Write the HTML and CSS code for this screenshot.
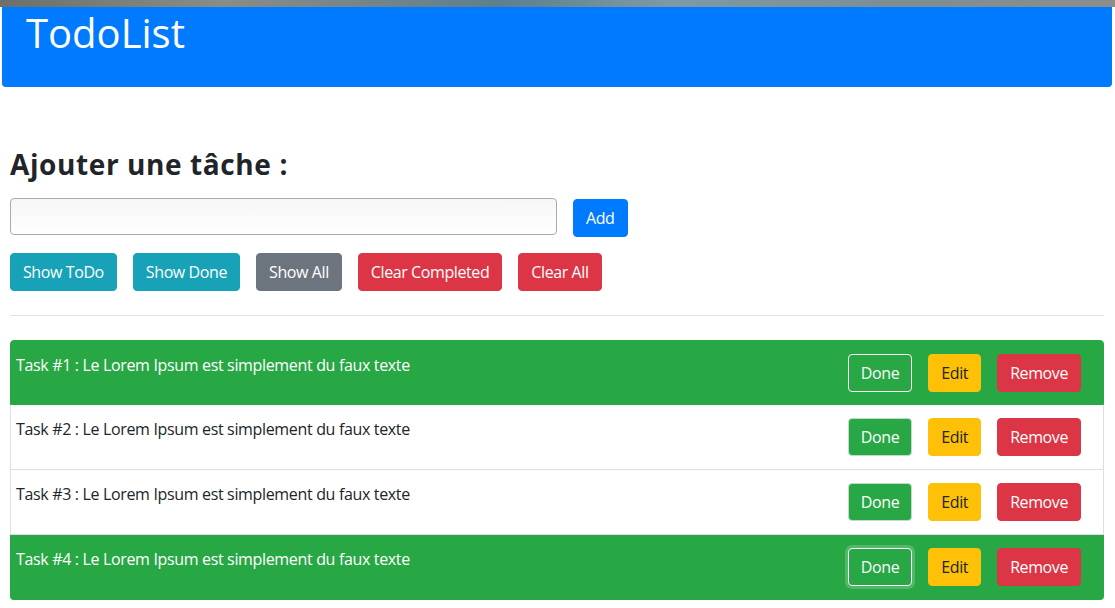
FILE: index.html
```html
<!DOCTYPE html>
<html lang="fr">
<head>
<meta charset="utf-8">
<title>TodoList</title>
<link rel="stylesheet" href="styles.css">
</head>
<body>
<div class="topstrip"></div>
<header class="jumbo">
  <h1 class="brand">TodoList</h1>
</header>
<main class="container">
  <h3 class="section-title">Ajouter une tâche :</h3>
  <form class="add-row">
    <input class="field" type="text">
    <button type="button" class="btn btn-primary">Add</button>
  </form>
  <div class="filters">
    <button type="button" class="btn btn-info">Show ToDo</button>
    <button type="button" class="btn btn-info">Show Done</button>
    <button type="button" class="btn btn-secondary">Show All</button>
    <button type="button" class="btn btn-danger">Clear Completed</button>
    <button type="button" class="btn btn-danger">Clear All</button>
  </div>
  <hr class="sep">
  <ul class="tasks">
    <li class="task done">
      <span class="task-text">Task #1 : Le Lorem Ipsum est simplement du faux texte</span>
      <div class="actions">
        <button type="button" class="btn btn-outline-light">Done</button>
        <button type="button" class="btn btn-warning">Edit</button>
        <button type="button" class="btn btn-danger">Remove</button>
      </div>
    </li>
    <li class="task">
      <span class="task-text">Task #2 : Le Lorem Ipsum est simplement du faux texte</span>
      <div class="actions">
        <button type="button" class="btn btn-success">Done</button>
        <button type="button" class="btn btn-warning">Edit</button>
        <button type="button" class="btn btn-danger">Remove</button>
      </div>
    </li>
    <li class="task">
      <span class="task-text">Task #3 : Le Lorem Ipsum est simplement du faux texte</span>
      <div class="actions">
        <button type="button" class="btn btn-success">Done</button>
        <button type="button" class="btn btn-warning">Edit</button>
        <button type="button" class="btn btn-danger">Remove</button>
      </div>
    </li>
    <li class="task done">
      <span class="task-text">Task #4 : Le Lorem Ipsum est simplement du faux texte</span>
      <div class="actions">
        <button type="button" class="btn btn-outline-light focus">Done</button>
        <button type="button" class="btn btn-warning">Edit</button>
        <button type="button" class="btn btn-danger">Remove</button>
      </div>
    </li>
  </ul>
</main>
</body>
</html>
```

FILE: styles.css
```css
* { box-sizing: border-box; }

html, body {
  margin: 0;
  padding: 0;
  background: #fff;
  font-family: "Open Sans", "Noto Sans", sans-serif;
  font-size: 16px;
  color: #212529;
}

.topstrip {
  height: 7px;
  background: linear-gradient(90deg, #6d6f6c 0%, #8a8c88 20%, #5e7f8e 45%, #7d9aa6 60%, #7c8e94 80%, #8b8e8c 100%);
}

.jumbo {
  height: 80px;
  margin: 0 3px 0 2px;
  background: #007bff;
  border-radius: 0 0 4px 4px;
  padding: 0 24px;
}

.brand {
  margin: 0;
  font-size: 40px;
  font-weight: 400;
  line-height: 52px;
  color: #fff;
}

.container {
  padding: 59px 10px 0 10px;
  margin-right: 1px;
}

.section-title {
  margin: 0 0 16px 0;
  font-size: 28px;
  font-weight: 700;
  letter-spacing: 0.6px;
  line-height: 36px;
  color: #212529;
}

.add-row {
  display: flex;
  align-items: flex-start;
  gap: 16px;
  margin: 0;
}

.field {
  width: 547px;
  height: 37px;
  border: 1px solid #aaa;
  border-radius: 4px;
  background: linear-gradient(#f6f6f6, #fff);
  font: inherit;
  margin-top: 0;
}

.add-row .btn { margin-top: 1px; }

.filters {
  display: flex;
  gap: 16px;
  margin-top: 16px;
}

.btn {
  font-family: inherit;
  font-size: 16px;
  letter-spacing: -0.4px;
  line-height: 24px;
  padding: 6px 12px;
  border: 1px solid transparent;
  border-radius: 4px;
  cursor: pointer;
  color: #fff;
  background: none;
}

.btn-primary { background: #007bff; border-color: #007bff; }
.btn-info { background: #17a2b8; border-color: #17a2b8; }
.btn-secondary { background: #6c757d; border-color: #6c757d; }
.btn-danger { background: #dc3545; border-color: #dc3545; }
.btn-warning { background: #ffc107; border-color: #ffc107; color: #212529; }
.btn-success { background: #28a745; border-color: #c9d8cc; }
.btn-outline-light { background: transparent; border-color: #f8f9fa; color: #f8f9fa; }
.btn-outline-light.focus { box-shadow: 0 0 0 3px rgba(248, 249, 250, 0.2); }

.sep {
  margin: 24px 0 24px 0;
  border: 0;
  border-top: 1px solid #e3e3e3;
}

.tasks {
  list-style: none;
  margin: 0;
  padding: 0;
}

.task {
  display: flex;
  justify-content: space-between;
  align-items: flex-start;
  height: 65px;
  padding: 13px 22px 0 5px;
  border: 1px solid #dfdfdf;
  border-top-width: 0;
  background: #fff;
}

.task:first-child {
  border-top-width: 1px;
  border-radius: 4px 4px 0 0;
}

.task:last-child { border-radius: 0 0 4px 4px; }

.task.done {
  background: #28a745;
  border-color: #28a745;
  color: #fff;
}

.task-text {
  line-height: 24px;
  margin-top: -1px;
  letter-spacing: -0.34px;
}

.actions {
  display: flex;
  gap: 16px;
}
```
